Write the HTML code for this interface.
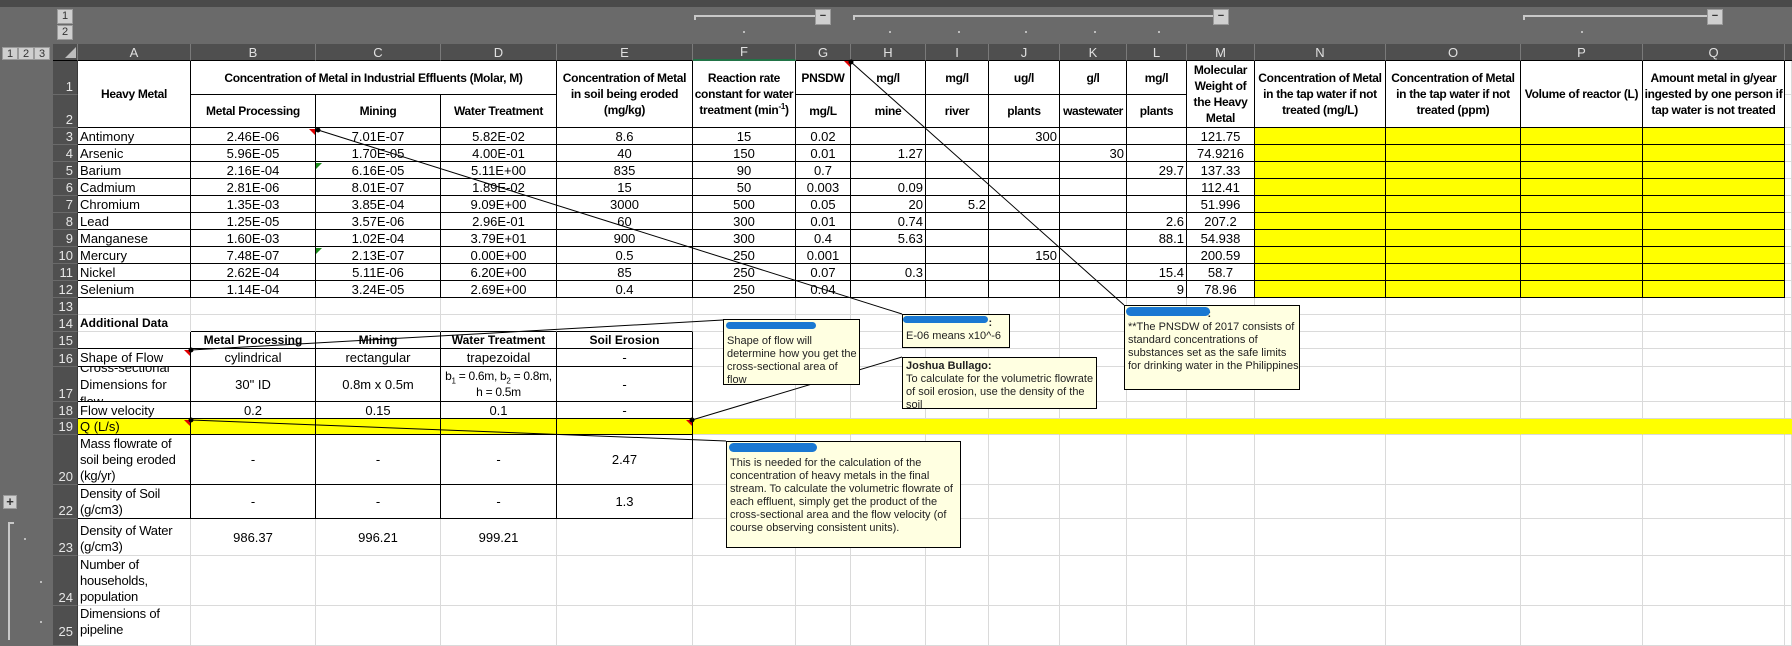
<!DOCTYPE html>
<html><head><meta charset="utf-8"><style>
*{box-sizing:border-box;margin:0;padding:0}
body{width:1792px;height:640px;overflow:hidden;background:#6a6a6a;position:relative;font-family:"Liberation Sans",Arial,sans-serif}
.abs{position:absolute}
table{position:absolute;left:53px;top:44px;border-collapse:separate;border-spacing:0;table-layout:fixed;width:1739px}
td{border-right:1px solid #dadada;border-bottom:1px solid #dadada;background:#fff;font-size:13px;color:#000;text-align:center;vertical-align:middle;white-space:nowrap;overflow:hidden;padding:0 2px;line-height:15px}
td.rh{background:#4f4f4f;color:#e6e6e6;border-right:1px solid #3a3a3a;border-bottom:1px solid #6a6a6a;text-align:right;vertical-align:bottom;padding:0 4px 0 0;font-size:13px}
td.ch{background:#4f4f4f;color:#e0e0e0;border-right:1px solid #7a7a7a;border-bottom:1px solid #000;font-size:13px;line-height:15px}
td.k{border-right:1px solid #000;border-bottom:1px solid #000}
td.bb{border-bottom:1px solid #000}
td.h{font-weight:bold;white-space:normal;line-height:16px;font-size:12px;letter-spacing:-0.3px;padding:0 1px}
td.l{text-align:left}
td.r{text-align:right}
td.y{background:#ffff00}
td.yy{background:#ffff00;border-right:1px solid #ffff00}
td.w{white-space:normal;text-align:left;vertical-align:bottom;line-height:16px;letter-spacing:-0.2px}
sup,sub{line-height:0}
.cm{position:absolute;background:#ffffe1;border:1px solid #000;font-size:11px;line-height:13px;color:#222;padding:2px 3px;white-space:nowrap}
.blur{position:absolute;background:#1a78d2;border-radius:6px}
.btn{position:absolute;background:#cfcfcf;border:1px solid #9a9a9a;color:#333;font-size:11px;line-height:13px;text-align:center}
.dot{position:absolute;width:2px;height:2px;background:#bdbdbd}
.tri{position:absolute;width:0;height:0}
tr.d{height:17px}
</style></head><body>
<div class="abs" style="left:0;top:0;width:1792px;height:7px;background:#4a4a4a"></div>
<div class="btn" style="left:57px;top:9px;width:16px;height:15px">1</div>
<div class="btn" style="left:57px;top:25px;width:16px;height:15px">2</div>
<div class="btn" style="left:2px;top:47px;width:16px;height:13px">1</div>
<div class="btn" style="left:18px;top:47px;width:16px;height:13px">2</div>
<div class="btn" style="left:34px;top:47px;width:16px;height:13px">3</div>
<div class="abs" style="left:694px;top:15px;width:121px;height:2px;background:#c8c8c8"></div>
<div class="abs" style="left:694px;top:15px;width:2px;height:5px;background:#c8c8c8"></div>
<div class="btn" style="left:815px;top:9px;width:16px;height:16px;font-weight:bold">−</div>
<div class="abs" style="left:853px;top:15px;width:360px;height:2px;background:#c8c8c8"></div>
<div class="abs" style="left:853px;top:15px;width:2px;height:5px;background:#c8c8c8"></div>
<div class="btn" style="left:1213px;top:9px;width:16px;height:16px;font-weight:bold">−</div>
<div class="abs" style="left:1523px;top:15px;width:184px;height:2px;background:#c8c8c8"></div>
<div class="abs" style="left:1523px;top:15px;width:2px;height:5px;background:#c8c8c8"></div>
<div class="btn" style="left:1707px;top:9px;width:16px;height:16px;font-weight:bold">−</div>
<div class="dot" style="left:743px;top:31px"></div><div class="dot" style="left:889px;top:31px"></div><div class="dot" style="left:958px;top:31px"></div><div class="dot" style="left:1025px;top:31px"></div><div class="dot" style="left:1094px;top:31px"></div><div class="dot" style="left:1158px;top:31px"></div><div class="dot" style="left:1581px;top:31px"></div>
<div class="btn" style="left:3px;top:495px;width:14px;height:14px;font-weight:bold;font-size:13px;line-height:12px">+</div>
<div class="abs" style="left:8px;top:522px;width:2px;height:118px;background:#c8c8c8"></div>
<div class="abs" style="left:8px;top:522px;width:6px;height:2px;background:#c8c8c8"></div>
<div class="dot" style="left:24px;top:538px"></div><div class="dot" style="left:40px;top:581px"></div><div class="dot" style="left:40px;top:621px"></div>

<table>
<colgroup><col style="width:25px"><col style="width:113px"><col style="width:125px"><col style="width:125px"><col style="width:116px"><col style="width:136px"><col style="width:103px"><col style="width:55px"><col style="width:75px"><col style="width:63px"><col style="width:71px"><col style="width:67px"><col style="width:60px"><col style="width:68px"><col style="width:131px"><col style="width:135px"><col style="width:122px"><col style="width:142px"><col style="width:7px"></colgroup>
<tr style="height:17px"><td class="ch"></td><td class="ch">A</td><td class="ch">B</td><td class="ch">C</td><td class="ch">D</td><td class="ch">E</td><td class="ch" style="border-bottom:2px solid #217346">F</td><td class="ch">G</td><td class="ch">H</td><td class="ch">I</td><td class="ch">J</td><td class="ch">K</td><td class="ch">L</td><td class="ch">M</td><td class="ch">N</td><td class="ch">O</td><td class="ch">P</td><td class="ch">Q</td><td class="ch" style="border-right:none"></td></tr>
<tr style="height:34px"><td class="rh">1</td><td class="k h" rowspan="2">Heavy Metal</td><td class="k h" colspan="3">Concentration of Metal in Industrial Effluents (Molar, M)</td><td class="k h" rowspan="2">Concentration of Metal in soil being eroded (mg/kg)</td><td class="k h" rowspan="2">Reaction rate constant for water treatment (min<sup style="font-size:8px">-1</sup>)</td><td class="k h">PNSDW</td><td class="k h">mg/l</td><td class="k h">mg/l</td><td class="k h">ug/l</td><td class="k h">g/l</td><td class="k h">mg/l</td><td class="k h" rowspan="2">Molecular Weight of the Heavy Metal</td><td class="k h" rowspan="2">Concentration of Metal in the tap water if not treated (mg/L)</td><td class="k h" rowspan="2">Concentration of Metal in the tap water if not treated (ppm)</td><td class="k h" rowspan="2">Volume of reactor (L)</td><td class="k h" rowspan="2">Amount metal in g/year ingested by one person if tap water is not treated</td><td></td></tr>
<tr style="height:33px"><td class="rh">2</td><td class="k h">Metal Processing</td><td class="k h">Mining</td><td class="k h">Water Treatment</td><td class="k h">mg/L</td><td class="k h">mine</td><td class="k h">river</td><td class="k h">plants</td><td class="k h" style="letter-spacing:-0.5px">wastewater</td><td class="k h">plants</td><td></td></tr>
<tr class="d"><td class="rh">3</td><td class="k l">Antimony</td><td class="k">2.46E-06</td><td class="k">7.01E-07</td><td class="k">5.82E-02</td><td class="k">8.6</td><td class="k">15</td><td class="k">0.02</td><td class="k r"></td><td class="k r"></td><td class="k r">300</td><td class="k r"></td><td class="k r"></td><td class="k">121.75</td><td class="k y"></td><td class="k y"></td><td class="k y"></td><td class="k y"></td><td></td></tr>
<tr class="d"><td class="rh">4</td><td class="k l">Arsenic</td><td class="k">5.96E-05</td><td class="k">1.70E-05</td><td class="k">4.00E-01</td><td class="k">40</td><td class="k">150</td><td class="k">0.01</td><td class="k r">1.27</td><td class="k r"></td><td class="k r"></td><td class="k r">30</td><td class="k r"></td><td class="k">74.9216</td><td class="k y"></td><td class="k y"></td><td class="k y"></td><td class="k y"></td><td></td></tr>
<tr class="d"><td class="rh">5</td><td class="k l">Barium</td><td class="k">2.16E-04</td><td class="k">6.16E-05</td><td class="k">5.11E+00</td><td class="k">835</td><td class="k">90</td><td class="k">0.7</td><td class="k r"></td><td class="k r"></td><td class="k r"></td><td class="k r"></td><td class="k r">29.7</td><td class="k">137.33</td><td class="k y"></td><td class="k y"></td><td class="k y"></td><td class="k y"></td><td></td></tr>
<tr class="d"><td class="rh">6</td><td class="k l">Cadmium</td><td class="k">2.81E-06</td><td class="k">8.01E-07</td><td class="k">1.89E-02</td><td class="k">15</td><td class="k">50</td><td class="k">0.003</td><td class="k r">0.09</td><td class="k r"></td><td class="k r"></td><td class="k r"></td><td class="k r"></td><td class="k">112.41</td><td class="k y"></td><td class="k y"></td><td class="k y"></td><td class="k y"></td><td></td></tr>
<tr class="d"><td class="rh">7</td><td class="k l">Chromium</td><td class="k">1.35E-03</td><td class="k">3.85E-04</td><td class="k">9.09E+00</td><td class="k">3000</td><td class="k">500</td><td class="k">0.05</td><td class="k r">20</td><td class="k r">5.2</td><td class="k r"></td><td class="k r"></td><td class="k r"></td><td class="k">51.996</td><td class="k y"></td><td class="k y"></td><td class="k y"></td><td class="k y"></td><td></td></tr>
<tr class="d"><td class="rh">8</td><td class="k l">Lead</td><td class="k">1.25E-05</td><td class="k">3.57E-06</td><td class="k">2.96E-01</td><td class="k">60</td><td class="k">300</td><td class="k">0.01</td><td class="k r">0.74</td><td class="k r"></td><td class="k r"></td><td class="k r"></td><td class="k r">2.6</td><td class="k">207.2</td><td class="k y"></td><td class="k y"></td><td class="k y"></td><td class="k y"></td><td></td></tr>
<tr class="d"><td class="rh">9</td><td class="k l">Manganese</td><td class="k">1.60E-03</td><td class="k">1.02E-04</td><td class="k">3.79E+01</td><td class="k">900</td><td class="k">300</td><td class="k">0.4</td><td class="k r">5.63</td><td class="k r"></td><td class="k r"></td><td class="k r"></td><td class="k r">88.1</td><td class="k">54.938</td><td class="k y"></td><td class="k y"></td><td class="k y"></td><td class="k y"></td><td></td></tr>
<tr class="d"><td class="rh">10</td><td class="k l">Mercury</td><td class="k">7.48E-07</td><td class="k">2.13E-07</td><td class="k">0.00E+00</td><td class="k">0.5</td><td class="k">250</td><td class="k">0.001</td><td class="k r"></td><td class="k r"></td><td class="k r">150</td><td class="k r"></td><td class="k r"></td><td class="k">200.59</td><td class="k y"></td><td class="k y"></td><td class="k y"></td><td class="k y"></td><td></td></tr>
<tr class="d"><td class="rh">11</td><td class="k l">Nickel</td><td class="k">2.62E-04</td><td class="k">5.11E-06</td><td class="k">6.20E+00</td><td class="k">85</td><td class="k">250</td><td class="k">0.07</td><td class="k r">0.3</td><td class="k r"></td><td class="k r"></td><td class="k r"></td><td class="k r">15.4</td><td class="k">58.7</td><td class="k y"></td><td class="k y"></td><td class="k y"></td><td class="k y"></td><td></td></tr>
<tr class="d"><td class="rh">12</td><td class="k l">Selenium</td><td class="k">1.14E-04</td><td class="k">3.24E-05</td><td class="k">2.69E+00</td><td class="k">0.4</td><td class="k">250</td><td class="k">0.04</td><td class="k r"></td><td class="k r"></td><td class="k r"></td><td class="k r"></td><td class="k r">9</td><td class="k">78.96</td><td class="k y"></td><td class="k y"></td><td class="k y"></td><td class="k y"></td><td></td></tr>
<tr class="d"><td class="rh">13</td><td></td><td></td><td></td><td></td><td></td><td></td><td></td><td></td><td></td><td></td><td></td><td></td><td></td><td></td><td></td><td></td><td></td><td></td></tr>
<tr class="d"><td class="rh">14</td><td class="l" style="font-weight:bold;overflow:visible;font-size:12px">Additional Data</td><td class="bb"></td><td class="bb"></td><td class="bb"></td><td class="bb"></td><td></td><td></td><td></td><td></td><td></td><td></td><td></td><td></td><td></td><td></td><td></td><td></td><td></td></tr>
<tr style="height:17px"><td class="rh">15</td><td class="k"></td><td class="k" style="font-weight:bold;font-size:12px">Metal Processing</td><td class="k" style="font-weight:bold;font-size:12px">Mining</td><td class="k" style="font-weight:bold;font-size:12px">Water Treatment</td><td class="k" style="font-weight:bold;font-size:12px">Soil Erosion</td><td></td><td></td><td></td><td></td><td></td><td></td><td></td><td></td><td></td><td></td><td></td><td></td><td></td></tr>
<tr style="height:18px"><td class="rh">16</td><td class="k l">Shape of Flow</td><td class="k">cylindrical</td><td class="k">rectangular</td><td class="k">trapezoidal</td><td class="k">-</td><td></td><td></td><td></td><td></td><td></td><td></td><td></td><td></td><td></td><td></td><td></td><td></td><td></td></tr>
<tr style="height:35px"><td class="rh">17</td><td class="k l" style="position:relative;padding:0"><div style="position:absolute;left:2px;top:-8px;line-height:17px">Cross-sectional<br>Dimensions for<br>flow</div></td><td class="k">30" ID</td><td class="k">0.8m x 0.5m</td><td class="k" style="line-height:16px;font-size:12px;letter-spacing:-0.3px">b<sub style="font-size:8px">1</sub> = 0.6m, b<sub style="font-size:8px">2</sub> = 0.8m,<br>h = 0.5m</td><td class="k">-</td><td></td><td></td><td></td><td></td><td></td><td></td><td></td><td></td><td></td><td></td><td></td><td></td><td></td></tr>
<tr style="height:17px"><td class="rh">18</td><td class="k l">Flow velocity</td><td class="k">0.2</td><td class="k">0.15</td><td class="k">0.1</td><td class="k">-</td><td></td><td></td><td></td><td></td><td></td><td></td><td></td><td></td><td></td><td></td><td></td><td></td><td></td></tr>
<tr style="height:16px"><td class="rh">19</td><td class="k l y">Q (L/s)</td><td class="k y"></td><td class="k y"></td><td class="k y"></td><td class="k y"></td><td class="yy"></td><td class="yy"></td><td class="yy"></td><td class="yy"></td><td class="yy"></td><td class="yy"></td><td class="yy"></td><td class="yy"></td><td class="yy"></td><td class="yy"></td><td class="yy"></td><td class="yy"></td><td class="yy"></td></tr>
<tr style="height:50px"><td class="rh">20</td><td class="k w">Mass flowrate of soil being eroded (kg/yr)</td><td class="k">-</td><td class="k">-</td><td class="k">-</td><td class="k">2.47</td><td></td><td></td><td></td><td></td><td></td><td></td><td></td><td></td><td></td><td></td><td></td><td></td><td></td></tr>
<tr style="height:34px"><td class="rh">22</td><td class="k w">Density of Soil (g/cm3)</td><td class="k">-</td><td class="k">-</td><td class="k">-</td><td class="k">1.3</td><td></td><td></td><td></td><td></td><td></td><td></td><td></td><td></td><td></td><td></td><td></td><td></td><td></td></tr>
<tr style="height:37px"><td class="rh">23</td><td class="w">Density of Water (g/cm3)</td><td>986.37</td><td>996.21</td><td>999.21</td><td></td><td></td><td></td><td></td><td></td><td></td><td></td><td></td><td></td><td></td><td></td><td></td><td></td><td></td></tr>
<tr style="height:50px"><td class="rh">24</td><td class="w">Number of households, population</td><td></td><td></td><td></td><td></td><td></td><td></td><td></td><td></td><td></td><td></td><td></td><td></td><td></td><td></td><td></td><td></td><td></td></tr>
<tr style="height:40px"><td class="rh" style="vertical-align:top;padding-top:18px">25</td><td class="w" style="vertical-align:top">Dimensions of pipeline</td><td></td><td></td><td></td><td></td><td></td><td></td><td></td><td></td><td></td><td></td><td></td><td></td><td></td><td></td><td></td><td></td><td></td></tr>
</table>
<div class="tri" style="left:65px;top:47px;border-left:11px solid transparent;border-bottom:11px solid #bdbdbd"></div>
<div class="tri" style="left:309px;top:129px;border-left:6px solid transparent;border-top:6px solid #e00000"></div>
<div class="tri" style="left:316px;top:163px;border-right:6px solid transparent;border-top:6px solid #1a8a1a"></div>
<div class="tri" style="left:316px;top:248px;border-right:6px solid transparent;border-top:6px solid #1a8a1a"></div>
<div class="tri" style="left:844px;top:61px;border-left:6px solid transparent;border-top:6px solid #e00000"></div>
<div class="tri" style="left:184px;top:350px;border-left:6px solid transparent;border-top:6px solid #e00000"></div>
<div class="tri" style="left:184px;top:420px;border-left:6px solid transparent;border-top:6px solid #e00000"></div>
<div class="tri" style="left:686px;top:420px;border-left:6px solid transparent;border-top:6px solid #e00000"></div>
<svg class="abs" style="left:0;top:0" width="1792" height="640">
<g stroke="#000" stroke-width="1" fill="#000">
<line x1="318" y1="130" x2="902" y2="314"/><circle cx="318" cy="130" r="2"/>
<line x1="851" y1="62" x2="1124" y2="305"/><circle cx="851" cy="62" r="2"/>
<line x1="191" y1="350" x2="723" y2="320"/><circle cx="191" cy="350" r="2"/>
<line x1="692" y1="420" x2="902" y2="357"/><circle cx="692" cy="420" r="2"/>
<line x1="191" y1="420" x2="726" y2="441"/><circle cx="191" cy="420" r="2"/>
</g></svg>
<div class="cm" style="left:723px;top:319px;width:137px;height:66px;padding-top:15px">Shape of flow will<br>determine how you get the<br>cross-sectional area of<br>flow</div>
<div class="blur" style="left:726px;top:322px;width:90px;height:7px"></div>
<div class="cm" style="left:902px;top:314px;width:108px;height:34px">&nbsp;&nbsp;&nbsp;&nbsp;&nbsp;&nbsp;&nbsp;&nbsp;&nbsp;&nbsp;&nbsp;&nbsp;&nbsp;&nbsp;&nbsp;&nbsp;&nbsp;&nbsp;&nbsp;&nbsp;&nbsp;&nbsp;&nbsp;&nbsp;&nbsp;&nbsp;&nbsp;<b>:</b><br>E-06 means x10^-6</div>
<div class="blur" style="left:903px;top:316px;width:85px;height:7px"></div>
<div class="cm" style="left:902px;top:357px;width:195px;height:52px"><b>Joshua Bullago:</b><br>To calculate for the volumetric flowrate<br>of soil erosion, use the density of the<br>soil</div>
<div class="cm" style="left:1124px;top:305px;width:176px;height:85px">&nbsp;&nbsp;&nbsp;&nbsp;&nbsp;&nbsp;&nbsp;&nbsp;&nbsp;&nbsp;&nbsp;&nbsp;&nbsp;&nbsp;&nbsp;&nbsp;&nbsp;&nbsp;&nbsp;&nbsp;&nbsp;&nbsp;&nbsp;&nbsp;&nbsp;&nbsp;<b>:</b><br>**The PNSDW of 2017 consists of<br>standard concentrations of<br>substances set as the safe limits<br>for drinking water in the Philippines</div>
<div class="blur" style="left:1126px;top:307px;width:84px;height:9px"></div>
<div class="cm" style="left:726px;top:441px;width:235px;height:107px;padding-top:15px">This is needed for the calculation of the<br>concentration of heavy metals in the final<br>stream. To calculate the volumetric flowrate of<br>each effluent, simply get the product of the<br>cross-sectional area and the flow velocity (of<br>course observing consistent units).</div>
<div class="blur" style="left:729px;top:443px;width:88px;height:9px"></div>
</body></html>
